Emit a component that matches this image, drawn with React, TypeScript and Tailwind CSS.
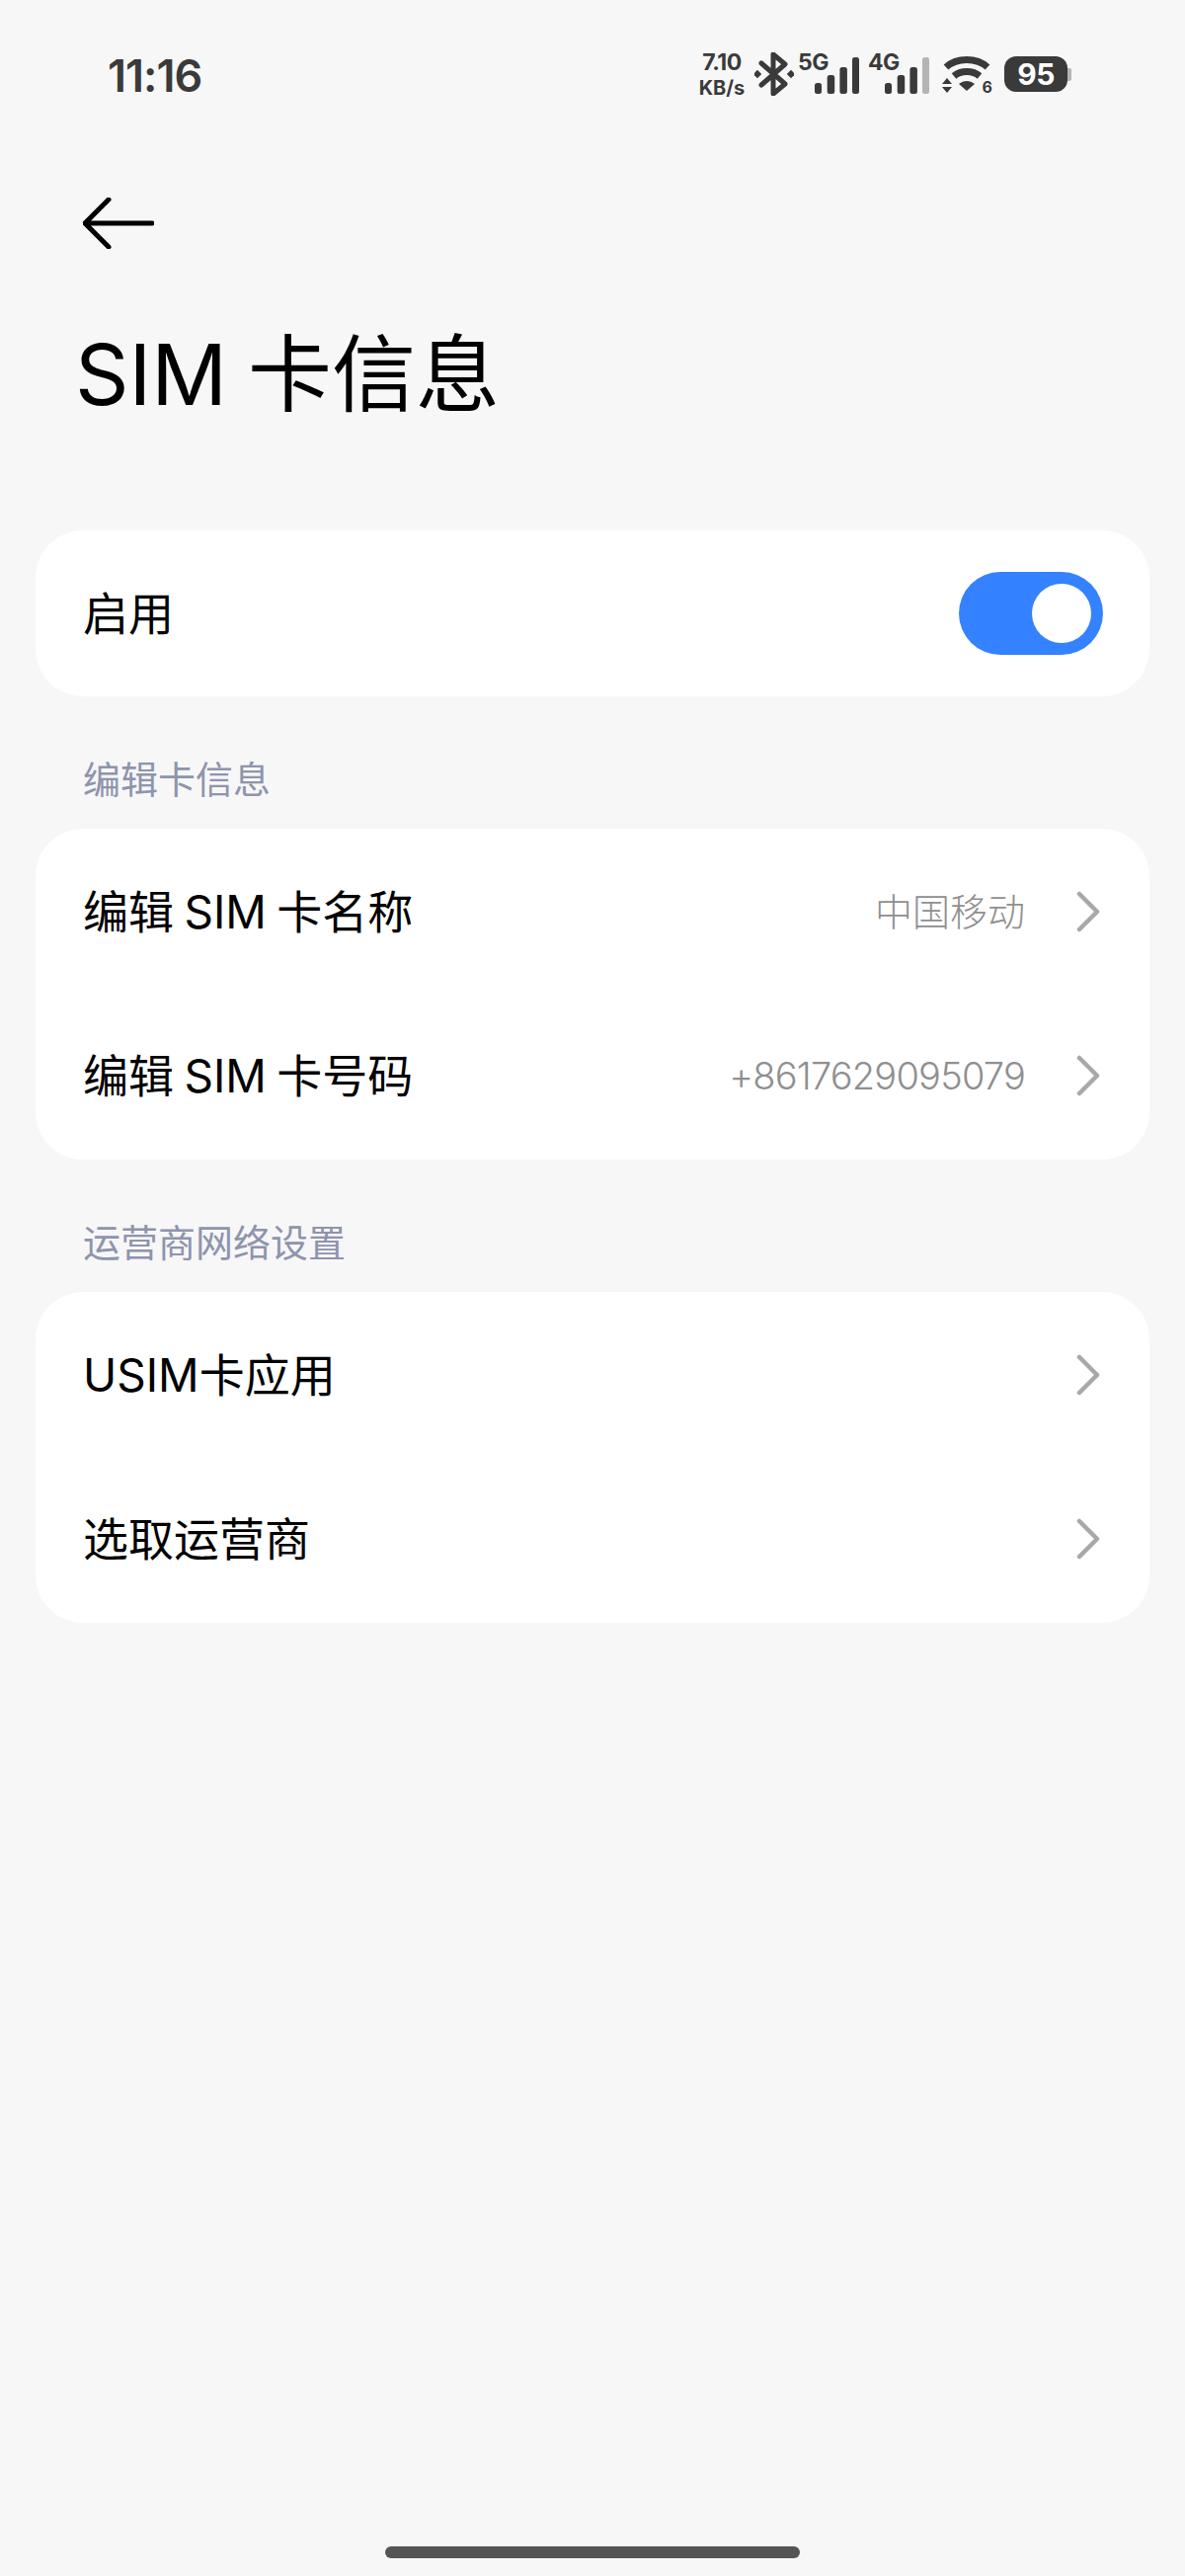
const sans = "font-['Inter','Noto_Sans_CJK_SC',sans-serif]";

function Chevron() {
  return (
    <svg width="24" height="42" viewBox="0 0 24 42" fill="none" stroke="#a8a8a8" strokeWidth="4.5" strokeLinecap="round" strokeLinejoin="round" className="shrink-0">
      <path d="M3 3 L21 21 L3 39" />
    </svg>
  );
}

function Row({ label, value, numeric }: { label: string; value?: string; numeric?: boolean }) {
  return (
    <div className="flex h-[166px] items-center pl-[48px] pr-[50px]">
      <span className="flex-1 text-[46px] leading-none text-black [word-spacing:-2.5px]">{label}</span>
      {value && (
        <span className={`mr-[52px] text-[38px] font-light leading-none text-[#8f8f8f] ${numeric ? "tracking-[-0.8px]" : ""}`}>
          {value}
        </span>
      )}
      <Chevron />
    </div>
  );
}

function SectionLabel({ children }: { children: string }) {
  return (
    <div className="flex h-[134px] items-center pl-[84px] pt-[34px] text-[38px] leading-none text-[#8e94ad]">
      {children}
    </div>
  );
}

function SignalBars({ lastDim }: { lastDim?: boolean }) {
  return (
    <svg width="45" height="37" viewBox="0 0 45 37" className="absolute bottom-0 right-0">
      <rect x="0" y="26" width="7" height="11" rx="2.5" fill="#3a3a3a" />
      <rect x="12.7" y="18" width="7.5" height="19" rx="2.5" fill="#3a3a3a" />
      <rect x="25.4" y="10" width="7.5" height="27" rx="2.5" fill="#3a3a3a" />
      <rect x="38" y="0" width="7" height="37" rx="2.5" fill={lastDim ? "#b4b4b4" : "#3a3a3a"} />
    </svg>
  );
}

function StatusBar() {
  return (
    <div className="flex h-[74px] items-center pl-[109px] text-[#3a3a3a]">
      <span className="mt-[3px] text-[45px] font-semibold leading-none tracking-[-1px]">11:16</span>
      <div className="ml-auto mr-[115px] flex items-center">
        <div className="flex w-[50px] flex-col items-center gap-[4px] font-bold leading-none">
          <span className="text-[23px] tracking-[-0.5px]">7.10</span>
          <span className="text-[20px]">KB/s</span>
        </div>
        <svg width="40" height="44" viewBox="0 0 40 44" fill="none" className="ml-[8px]">
          <path d="M7 11 L31 32 L19 42 V2 L31 12 L7 33" stroke="#3a3a3a" strokeWidth="5" strokeLinejoin="round" strokeLinecap="round" />
          <rect x="0" y="19" width="6" height="6" transform="rotate(45 3 22)" fill="#3a3a3a" />
          <rect x="34" y="19" width="6" height="6" transform="rotate(45 37 22)" fill="#3a3a3a" />
        </svg>
        <div className="relative ml-[4px] h-[40px] w-[62px]">
          <span className="absolute left-0 top-[-3px] text-[23px] font-bold leading-none tracking-[-0.5px]">5G</span>
          <SignalBars />
        </div>
        <div className="relative ml-[9px] h-[40px] w-[62px]">
          <span className="absolute left-0 top-[-3px] text-[23px] font-bold leading-none tracking-[-0.5px]">4G</span>
          <SignalBars lastDim />
        </div>
        <div className="relative ml-[13px] h-[40px] w-[50px]">
          <svg width="50" height="40" viewBox="0 0 50 40" fill="none" className="absolute left-0 top-0">
            <path d="M4 13 C15 3 35 3 46 13" stroke="#3a3a3a" strokeWidth="7" />
            <path d="M12 22 C19 16 31 16 38 22" stroke="#3a3a3a" strokeWidth="7" />
            <path d="M17 30 C22 26 28 26 33 30 L25 37 Z" fill="#3a3a3a" />
            <path d="M5 24 L10 30 H0 Z M5 39 L0 33 H10 Z" fill="#3a3a3a" />
          </svg>
          <span className="absolute right-[-1px] bottom-[-1px] text-[16px] font-bold leading-none">6</span>
        </div>
        <div className="ml-[13px] flex items-center">
          <div className="flex h-[36px] w-[64px] items-center justify-center rounded-[12px] bg-[#3a3a3a] text-[30px] font-bold leading-none tracking-[-0.5px] text-white">95</div>
          <div className="h-[13px] w-[4px] rounded-r-[2px] bg-[#b4b4b4]" />
        </div>
      </div>
    </div>
  );
}

export default function App() {
  return (
    <div className={`relative flex min-h-[2608px] flex-col bg-[#f7f7f7] pt-[38px] ${sans}`}>
      <StatusBar />

      <div className="mt-[58px] flex h-[112px] items-center pl-[84px]">
        <svg width="72" height="52" viewBox="0 0 72 52" fill="none" stroke="#000" strokeWidth="5" strokeLinecap="round" strokeLinejoin="round">
          <path d="M26 2 L2 26 L26 50 M2 26 H70" />
        </svg>
      </div>

      <h1 className="mt-[49px] flex h-[96px] items-center pl-[76px] text-[85px] font-normal leading-none text-black [word-spacing:-3px]">SIM 卡信息</h1>

      <div className="mx-[36px] mt-[110px] flex h-[168px] items-center justify-between rounded-[48px] bg-white pl-[48px] pr-[47px]">
        <span className="text-[46px] leading-none text-black">启用</span>
        <div className="flex h-[84px] w-[146px] items-center justify-end rounded-full bg-[#3482ff] pr-[12px]">
          <div className="h-[60px] w-[60px] rounded-full bg-white" />
        </div>
      </div>

      <SectionLabel>编辑卡信息</SectionLabel>
      <div className="mx-[36px] rounded-[48px] bg-white pt-[1px] pb-[2px]">
        <Row label="编辑 SIM 卡名称" value="中国移动" />
        <Row label="编辑 SIM 卡号码" value="+8617629095079" numeric />
      </div>

      <SectionLabel>运营商网络设置</SectionLabel>
      <div className="mx-[36px] rounded-[48px] bg-white pt-[1px] pb-[2px]">
        <Row label="USIM卡应用" />
        <Row label="选取运营商" />
      </div>

      <div className="absolute bottom-[18px] left-[390px] h-[12px] w-[420px] rounded-full bg-[#555555]" />
    </div>
  );
}
